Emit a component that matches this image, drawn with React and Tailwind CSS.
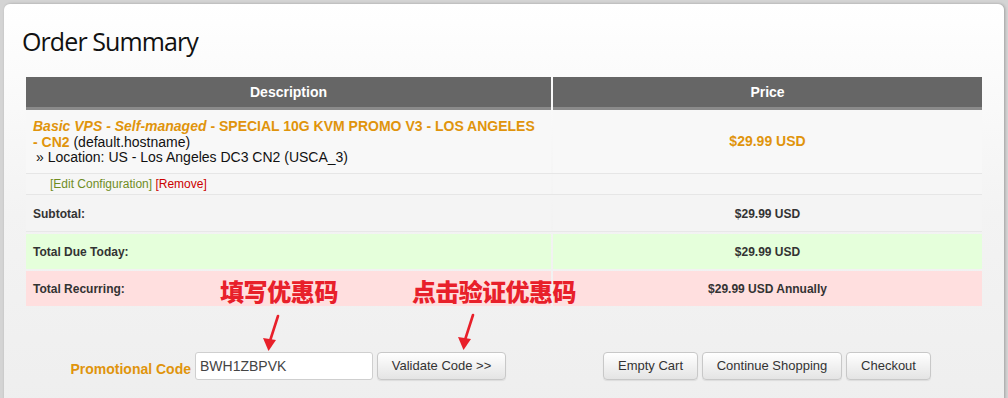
import React from 'react';

const btn =
  'h-[28px] rounded-[4px] border border-[#c8c8c8] bg-gradient-to-b from-white to-[#e4e4e4] text-[13px] text-[#333] whitespace-nowrap shadow-[0_1px_1px_rgba(0,0,0,0.08)]';

function Arrow({ className }) {
  return (
    <svg className={className} width="24" height="40" viewBox="0 0 24 40">
      <line x1="18" y1="2" x2="9" y2="30" stroke="#e8202a" strokeWidth="2.6" strokeLinecap="round" />
      <path d="M3 24 L8.5 37 L16 26 Z" fill="#e8202a" />
    </svg>
  );
}

export default function App() {
  return (
    <div className="w-[1008px] h-[398px] overflow-hidden bg-[#d4d4d4] pt-[4px] pl-[4px] font-['Liberation_Sans',Arial,sans-serif]">
      <div className="relative w-[1000px] h-[420px] rounded-[6px] bg-gradient-to-b from-white via-[#f3f3f3] to-[#eeeeee] shadow-[1px_0_3px_rgba(0,0,0,0.25)] pl-[22px] pt-[22px]">
        <h1 className="-ml-[4px] text-[25px] leading-[30px] text-[#111] font-['Open_Sans',sans-serif] tracking-[-0.9px] h-[51px]">
          Order Summary
        </h1>

        <div className="w-[956px]">
          {/* header */}
          <div className="flex gap-[2px] h-[33px] text-white text-[14px] font-bold">
            <div className="w-[525px] bg-[#666] border-b-[3px] border-[#8a8a8a] flex items-center justify-center">
              Description
            </div>
            <div className="flex-1 bg-[#666] border-b-[3px] border-[#8a8a8a] flex items-center justify-center">
              Price
            </div>
          </div>

          {/* product */}
          <div className="flex gap-[2px] h-[64px] border-b border-[#e6e6e6]">
            <div className="w-[525px] bg-[#f8f8f8] pl-[7px] pr-[10px] pt-[9px] text-[14px] leading-[15.5px] text-[#111]">
              <span className="text-[#e0940c] font-bold">
                <i>Basic VPS - Self-managed</i> - SPECIAL 10G KVM PROMO V3 - LOS ANGELES - CN2
              </span>{' '}
              (default.hostname)
              <div className="pl-[3px]">» Location: US - Los Angeles DC3 CN2 (USCA_3)</div>
            </div>
            <div className="flex-1 bg-[#f8f8f8] flex items-center justify-center text-[14px] font-bold text-[#e0940c]">
              $29.99 USD
            </div>
          </div>

          {/* config links */}
          <div className="flex gap-[2px] h-[21px] border-b border-[#e6e6e6]">
            <div className="w-[525px] bg-[#f6f6f6] pl-[24px] text-[12px] leading-[21px]">
              <span className="text-[#6f8d1f]">[Edit Configuration]</span>{' '}
              <span className="text-[#cc0000]">[Remove]</span>
            </div>
            <div className="flex-1 bg-[#f6f6f6]" />
          </div>

          {/* subtotal */}
          <div className="flex gap-[2px] h-[37px] border-b border-[#e8e8e8] text-[12px] font-bold text-[#333]">
            <div className="w-[525px] bg-[#f4f4f4] pl-[7px] pt-[2px] flex items-center">Subtotal:</div>
            <div className="flex-1 bg-[#f4f4f4] pt-[2px] flex items-center justify-center">$29.99 USD</div>
          </div>

          <div className="flex gap-[2px] h-[35px] mt-[2px] text-[12px] font-bold text-[#333]">
            <div className="w-[525px] bg-[#e5ffdb] pl-[7px] flex items-center">Total Due Today:</div>
            <div className="flex-1 bg-[#e5ffdb] flex items-center justify-center">$29.99 USD</div>
          </div>

          <div className="flex gap-[2px] h-[35px] mt-[2px] text-[12px] font-bold text-[#333]">
            <div className="w-[525px] bg-[#ffdfdf] pl-[7px] flex items-center">Total Recurring:</div>
            <div className="flex-1 bg-[#ffdfdf] flex items-center justify-center">$29.99 USD Annually</div>
          </div>
        </div>

        {/* promo + actions */}
        <div className="flex items-center mt-[46px] h-[28px]">
          <div className="w-[169px] text-right pr-[4px] text-[14px] font-bold text-[#e0940c] pt-[6px]">
            Promotional Code
          </div>
          <input
            readOnly
            value="BWH1ZBPVK"
            className="w-[178px] h-[28px] rounded-[3px] border border-[#cfcfcf] bg-white px-[4px] text-[14px] text-[#444] outline-none"
          />
          <button className={`${btn} ml-[4px] w-[129px]`}>Validate Code &gt;&gt;</button>
          <button className={`${btn} ml-[97px] w-[95px]`}>Empty Cart</button>
          <button className={`${btn} ml-[4px] w-[140px]`}>Continue Shopping</button>
          <button className={`${btn} ml-[4px] w-[85px]`}>Checkout</button>
        </div>

        {/* annotations */}
        <div className="absolute left-[216px] top-[272px] text-[24px] font-black text-[#e8202a] font-['Noto_Sans_CJK_SC',sans-serif] leading-[30px] tracking-[-0.4px]">
          填写优惠码
        </div>
        <div className="absolute left-[408px] top-[272px] text-[24px] font-black text-[#e8202a] font-['Noto_Sans_CJK_SC',sans-serif] leading-[30px] tracking-[-0.6px]">
          点击验证优惠码
        </div>
        <Arrow className="absolute left-[256px] top-[310px]" />
        <Arrow className="absolute left-[451px] top-[309px]" />
      </div>
    </div>
  );
}
